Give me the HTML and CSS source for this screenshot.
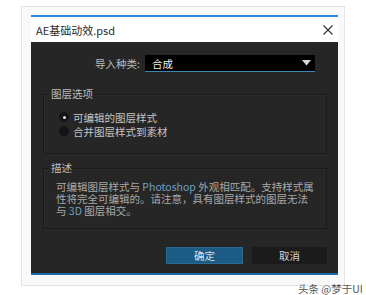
FILE: index.html
```html
<!DOCTYPE html>
<html>
<head>
<meta charset="utf-8">
<link rel="stylesheet" href="styles.css">
</head>
<body>
<div class="frame">
  <div class="window">
    <div class="titlebar">
      <span class="title">AE基础动效.psd</span>
      <svg class="close" width="10" height="10" viewBox="0 0 10 10"><path d="M0.5 0.5L9.5 9.5M9.5 0.5L0.5 9.5" stroke="#333" stroke-width="1.1" fill="none"/></svg>
    </div>
    <div class="body">
      <div class="row">
        <span class="label">导入种类:</span>
        <div class="select">
          <span>合成</span>
          <svg class="arrow" width="9" height="6" viewBox="0 0 9 6"><path d="M0 0H9L4.5 5.5Z" fill="#d8d8d8"/></svg>
        </div>
      </div>
      <div class="group g1">
        <div class="legend">图层选项</div>
        <div class="radio"><span class="dot on"></span>可编辑的图层样式</div>
        <div class="radio"><span class="dot"></span>合并图层样式到素材</div>
      </div>
      <div class="group g2">
        <div class="legend">描述</div>
        <p class="desc"><span class="line">可编辑图层样式与 <span class="hl">Photoshop</span> 外观相匹配。支持样式属</span><span class="line">性将完全可编辑的。请注意，具有图层样式的图层无法</span><span class="line">与 <span class="hl">3D</span> 图层相交。</span></p>
      </div>
      <div class="buttons">
        <div class="btn ok">确定</div>
        <div class="btn cancel">取消</div>
      </div>
    </div>
  </div>
  <div class="watermark">头条 @梦于UI</div>
</div>
</body>
</html>
```
FILE: styles.css
```css
html, body {
  margin: 0;
  padding: 0;
  background: #ffffff;
}
body {
  font-family: "Noto Sans CJK SC", "Noto Sans", sans-serif;
  width: 366px;
  height: 295px;
  overflow: hidden;
}
.frame {
  position: relative;
  margin: 6px 0 0 21px;
  width: 324px;
  height: 280px;
  border: 1px solid #e2e2e4;
  background: #f9f9fa;
  padding: 8px 0 0 9px;
  box-sizing: border-box;
}
.window {
  width: 307px;
  border-top: 2px solid #2b8ad8;
}
.titlebar {
  height: 25px;
  background: #ffffff;
  display: flex;
  align-items: center;
  justify-content: space-between;
  padding: 0 5px 0 5px;
}
.title {
  font-size: 11px;
  color: #2a2a2a;
}
.close {
  display: block;
  margin-top: 1px;
}
.body {
  background: #262626;
  height: 233px;
  border-bottom: 2px solid #1d6aa6;
  box-sizing: border-box;
  padding: 13px 11px 0 12px;
  font-size: 10.5px;
  color: #c4c4c4;
}
.row {
  display: flex;
  align-items: center;
  height: 17px;
}
.label {
  width: 102px;
  text-align: right;
  padding-right: 5px;
  color: #bdbdbd;
  box-sizing: border-box;
}
.select {
  width: 170px;
  height: 17px;
  box-sizing: border-box;
  background: #000;
  border-bottom: 1px solid #3a8ab8;
  display: flex;
  align-items: center;
  justify-content: space-between;
  padding: 0 4px 0 7px;
  color: #f0f0f0;
}
.arrow {
  display: block;
}
.group {
  position: relative;
  border: 1px solid #1a1a1a;
  box-shadow: inset 1px 1px 0 #2e2e2e;
  width: 284px;
  box-sizing: border-box;
}
.g1 {
  margin-top: 22px;
  height: 60px;
  padding: 15px 0 0 15px;
}
.g2 {
  margin-top: 14px;
  height: 61px;
  padding: 12px 0 0 12px;
}
.legend {
  position: absolute;
  left: 5px;
  top: -7px;
  padding: 0 2px;
  background: #262626;
  line-height: 12px;
  color: #bdbdbd;
}
.radio {
  display: flex;
  align-items: center;
  height: 14px;
  color: #c4c4c4;
}
.dot {
  width: 10px;
  height: 10px;
  border-radius: 50%;
  background: #141414;
  margin-right: 4px;
  display: flex;
  align-items: center;
  justify-content: center;
}
.dot.on::after {
  content: "";
  width: 3px;
  height: 3px;
  border-radius: 50%;
  background: #e8e8e8;
}
.desc {
  margin: 0;
  color: #a8a8a8;
  font-size: 10.5px;
  white-space: nowrap;
  display: flex;
  flex-direction: column;
}
.line {
  display: block;
  height: 12px;
  line-height: 12px;
}
.hl {
  color: #6f9fc6;
}
.buttons {
  display: flex;
  justify-content: flex-end;
  gap: 9px;
  margin-top: 18px;
}
.btn {
  height: 17px;
  display: flex;
  align-items: center;
  justify-content: center;
  box-sizing: border-box;
}
.ok {
  width: 77px;
  background: #1c5b84;
  border: 1px solid #2a6b95;
  color: #d8e4ee;
}
.cancel {
  width: 75px;
  background: #1b1b1b;
  color: #d0d0d0;
}
.watermark {
  position: absolute;
  left: 276px;
  top: 276px;
  font-size: 10.5px;
  color: #555;
  white-space: nowrap;
  line-height: 12px;
}
```
